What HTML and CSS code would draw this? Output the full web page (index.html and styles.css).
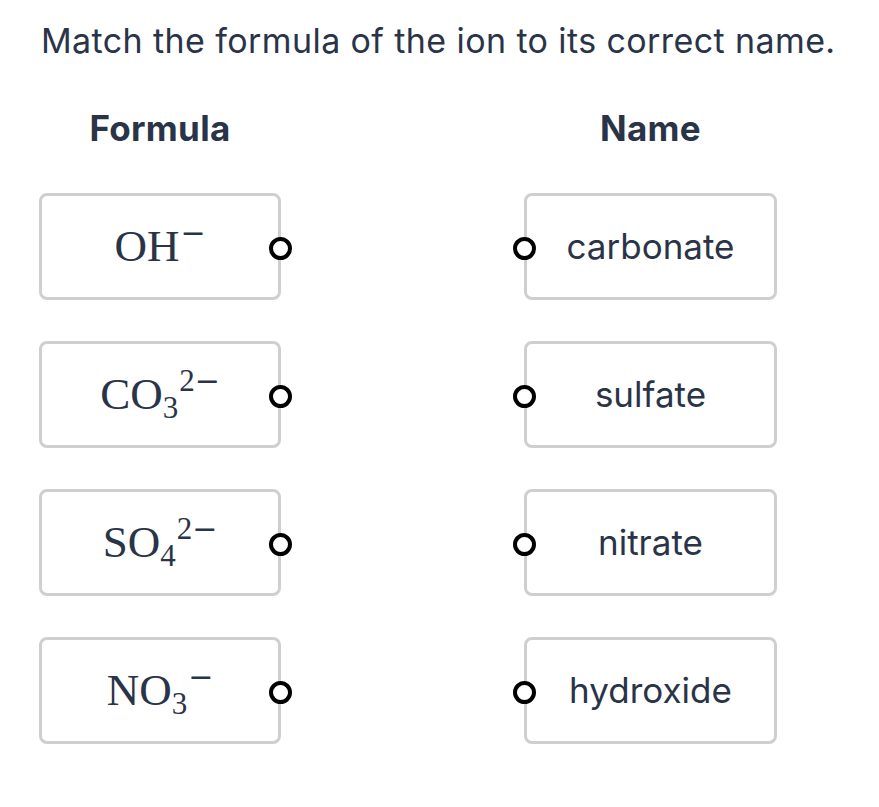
FILE: index.html
```html
<!DOCTYPE html>
<html lang="en">
<head>
    <meta charset="UTF-8">
    <meta name="viewport" content="width=device-width, initial-scale=1.0">
    <title>Match the ions</title>
    <link rel="stylesheet" href="styles.css">
</head>
<body>
    <main class="page">
        <h1 class="question">Match the formula of the ion to its correct name.</h1>

        <div class="match">
            <h2 class="col-head">Formula</h2>
            <h2 class="col-head">Name</h2>

            <div class="card card-left">
                <span class="formula">OH<sup><span class="minus">−</span></sup></span>
                <span class="dot"></span>
            </div>
            <div class="card card-right">
                <span class="dot"></span>
                <span class="name">carbonate</span>
            </div>

            <div class="card card-left">
                <span class="formula">CO<sub>3</sub><sup>2<span class="minus">−</span></sup></span>
                <span class="dot"></span>
            </div>
            <div class="card card-right">
                <span class="dot"></span>
                <span class="name">sulfate</span>
            </div>

            <div class="card card-left">
                <span class="formula">SO<sub>4</sub><sup>2<span class="minus">−</span></sup></span>
                <span class="dot"></span>
            </div>
            <div class="card card-right">
                <span class="dot"></span>
                <span class="name">nitrate</span>
            </div>

            <div class="card card-left">
                <span class="formula">NO<sub>3</sub><sup><span class="minus">−</span></sup></span>
                <span class="dot"></span>
            </div>
            <div class="card card-right">
                <span class="dot"></span>
                <span class="name">hydroxide</span>
            </div>
        </div>
    </main>
</body>
</html>
```

FILE: styles.css
```css
body {
    margin: 0;
    background: #fff;
    color: #2a3448;
    font-family: Inter, "Noto Sans", sans-serif;
}

.page {
    padding: 21px 0 0 41px;
}

.question {
    margin: 0;
    font-size: 34px;
    font-weight: 400;
    letter-spacing: 0.4px;
    line-height: 40px;
}

.match {
    display: grid;
    grid-template-columns: 242px 253px;
    column-gap: 243px;
    row-gap: 41px;
    margin-top: 48px;
    margin-left: -2px;
}

.col-head {
    margin: 0 0 5px;
    font-size: 35px;
    font-weight: 700;
    letter-spacing: 0.3px;
    line-height: 38px;
    text-align: center;
}

.card {
    position: relative;
    height: 107px;
    box-sizing: border-box;
    border: 3px solid #cfcfcf;
    border-radius: 8px;
    display: flex;
    align-items: center;
    justify-content: center;
}

.formula {
    font-family: "Liberation Serif", "DejaVu Serif", serif;
    font-size: 45px;
    line-height: 1;
}

.formula sub,
.formula sup {
    font-size: 31px;
    line-height: 0;
    position: relative;
    vertical-align: baseline;
}

.formula sub {
    top: 9px;
}

.formula sup {
    top: -18px;
    margin-left: 1px;
}

/* wider minus like the math font */
.minus {
    font-family: "DejaVu Serif", serif;
    font-size: 30px;
}

.name {
    font-size: 35px;
    line-height: 1;
}

/* connector dot sits on the card border */
.dot {
    position: absolute;
    top: 50%;
    width: 23px;
    height: 23px;
    box-sizing: border-box;
    margin-top: -10px;
    border: 4px solid #000;
    border-radius: 50%;
    background: #fff;
}

.card-left .dot {
    right: -14px;
}

.card-right .dot {
    left: -14px;
}
```
